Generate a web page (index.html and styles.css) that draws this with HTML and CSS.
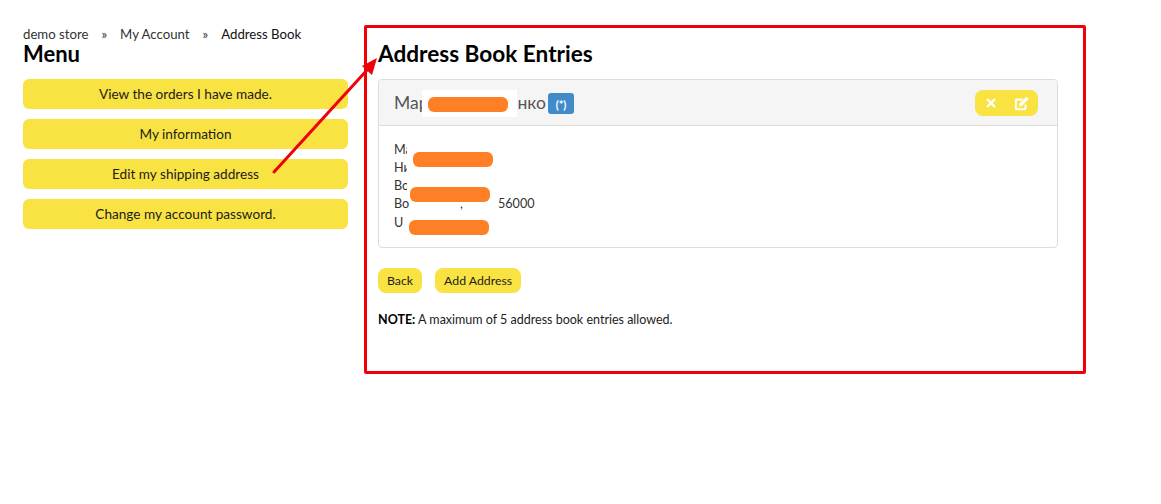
FILE: index.html
```html
<!DOCTYPE html>
<html lang="en">
<head>
  <meta charset="UTF-8" />
  <title>Address Book</title>
  <link rel="stylesheet" href="styles.css">
</head>
<body>

  <div class="page">
    <!-- LEFT COLUMN -->
    <div class="sidebar">
      <div class="breadcrumb">
        <a>demo store</a><span class="sep">»</span><a>My Account</a><span class="sep">»</span><span class="current">Address Book</span>
      </div>
      <h2 class="menu-title">Menu</h2>
      <div class="menu">
        <a class="menu-button">View the orders I have made.</a>
        <a class="menu-button">My information</a>
        <a class="menu-button">Edit my shipping address</a>
        <a class="menu-button">Change my account password.</a>
      </div>
    </div>

    <!-- MAIN COLUMN -->
    <div class="main">
      <h1 class="page-title">Address Book Entries</h1>

      <div class="panel">
        <div class="panel-heading">
          <span class="panel-name">Мар<span class="name-gap"></span>нко</span>
          <span class="label-primary">(*)</span>
          <div class="btn-group">
            <svg class="icon" viewBox="0 0 12 12" width="12" height="12">
              <path d="M2 2l8 8M10 2l-8 8" fill="none" stroke="#fff" stroke-width="2.4"/>
            </svg>
            <svg class="icon" viewBox="0 0 16 16" width="16" height="16">
              <path d="M11.500 9.500V13a1.200 1.200 0 0 1-1.200 1.200H3A1.200 1.200 0 0 1 1.800 13V5.700A1.200 1.200 0 0 1 3 4.500h5.500" fill="none" stroke="#fff" stroke-width="2"/>
              <path d="M5.500 8.500L12.300 1.700l2.400 2.400L7.900 10.900l-2.900.5z" fill="#fff"/>
            </svg>
          </div>
        </div>
        <div class="panel-body">
          <div>Ма</div>
          <div>Ни</div>
          <div>Во</div>
          <div><span class="line-start">Во</span><span class="line-comma">,</span>56000</div>
          <div>U</div>
        </div>
      </div>

      <div class="actions">
        <a class="small-button">Back</a>
        <a class="small-button">Add Address</a>
      </div>

      <p class="note"><strong>NOTE:</strong> A maximum of 5 address book entries allowed.</p>
    </div>
  </div>

  <!-- annotations drawn over the screenshot -->
  <div class="mark-box"></div>
  <div class="patch patch-name"></div>
  <div class="patch patch-lines"></div>
  <div class="blob blob-name"></div>
  <div class="blob blob-1"></div>
  <div class="blob blob-2"></div>
  <div class="blob blob-3"></div>
  <svg class="mark-arrow" width="1161" height="504" viewBox="0 0 1161 504">
    <path d="M274 172L368 69" fill="none" stroke="#f00008" stroke-width="3" stroke-linecap="round"/>
    <path d="M377 58L372 75L362 66z" fill="#f00008"/>
  </svg>

</body>
</html>
```

FILE: styles.css
```css
:root {
  --yellow: #f9e343;
  --text: #1c1c1c;
  --red: #f00008;
  --orange: #ff7f27;
}

html, body {
  margin: 0;
  height: 504px;
  overflow: hidden;
}

body {
  background: #fff;
  color: var(--text);
  font-family: Lato, "Noto Sans", sans-serif;
  font-size: 13.600px;
}

.page {
  display: flex;
  padding: 0 0 0 23px;
  gap: 30px;
}

/* left column */
.sidebar {
  width: 325px;
  padding-top: 26px;
}

.breadcrumb {
  font-size: 13.200px;
  line-height: 16px;
  color: #333;
}

.breadcrumb .sep {
  margin: 0 13px;
}

.breadcrumb .current {
  color: #111;
}

.menu-title {
  margin: 0;
  font-size: 22px;
  line-height: 24px;
  font-weight: 700;
  color: #000;
}

.menu {
  display: flex;
  flex-direction: column;
  gap: 10px;
  margin-top: 13px;
}

.menu-button {
  height: 30px;
  line-height: 30px;
  text-align: center;
  background: var(--yellow);
  border-radius: 6px;
}

/* main column */
.main {
  width: 680px;
  padding-top: 41px;
}

.page-title {
  margin: 0;
  font-size: 22.600px;
  line-height: 26px;
  font-weight: 700;
  color: #000;
}

.panel {
  margin-top: 12px;
  height: 167px;
  border: 1px solid #ddd;
  border-radius: 4px;
}

.panel-heading {
  display: flex;
  align-items: center;
  height: 45px;
  padding: 0 19px 0 15px;
  background: #f5f5f5;
  border-bottom: 1px solid #ddd;
  border-radius: 4px 4px 0 0;
}

.panel-name {
  font-size: 17.500px;
  color: #555;
}

.name-gap {
  display: inline-block;
  width: 89px;
}

.label-primary {
  display: flex;
  justify-content: center;
  align-items: center;
  width: 26px;
  height: 21px;
  margin: 2px 0 0 2px;
  padding-top: 2px;
  box-sizing: border-box;
  background: #428bca;
  border-radius: 3px;
  color: #fff;
  font-size: 11px;
  font-weight: 700;
}

.btn-group {
  display: flex;
  align-items: center;
  justify-content: space-between;
  width: 63px;
  height: 26px;
  box-sizing: border-box;
  padding: 0 8px 0 10px;
  margin-left: auto;
  background: var(--yellow);
  border-radius: 8px;
}

.panel-body {
  padding: 14.500px 15px;
  font-size: 12.600px;
  line-height: 18.300px;
  color: #333;
}

.line-start {
  display: inline-block;
  width: 66px;
}

.line-comma {
  display: inline-block;
  width: 38px;
}

.actions {
  display: flex;
  gap: 13px;
  margin-top: 20px;
}

.small-button {
  height: 25px;
  line-height: 25px;
  padding: 0 9px;
  font-size: 12.300px;
  background: var(--yellow);
  border-radius: 8px;
}

.note {
  margin: 19px 0 0;
  font-size: 12.500px;
  line-height: 15px;
}

.note strong {
  color: #000;
}

/* annotations */
.mark-box {
  position: absolute;
  left: 364px;
  top: 25px;
  width: 716px;
  height: 343px;
  border: 3px solid var(--red);
  border-radius: 2px;
}

.mark-arrow {
  position: absolute;
  left: 0;
  top: 0;
}

.patch {
  position: absolute;
  background: #fff;
}

.patch-name {
  left: 422px;
  top: 90px;
  width: 95px;
  height: 27px;
}

.patch-lines {
  left: 407px;
  top: 142px;
  width: 10px;
  height: 52px;
}

.blob {
  position: absolute;
  width: 80px;
  height: 15px;
  background: var(--orange);
  border-radius: 6px;
}

.blob-name {
  left: 428px;
  top: 97px;
}

.blob-1 {
  left: 413px;
  top: 152px;
}

.blob-2 {
  left: 410px;
  top: 187px;
}

.blob-3 {
  left: 409px;
  top: 220px;
}
```
